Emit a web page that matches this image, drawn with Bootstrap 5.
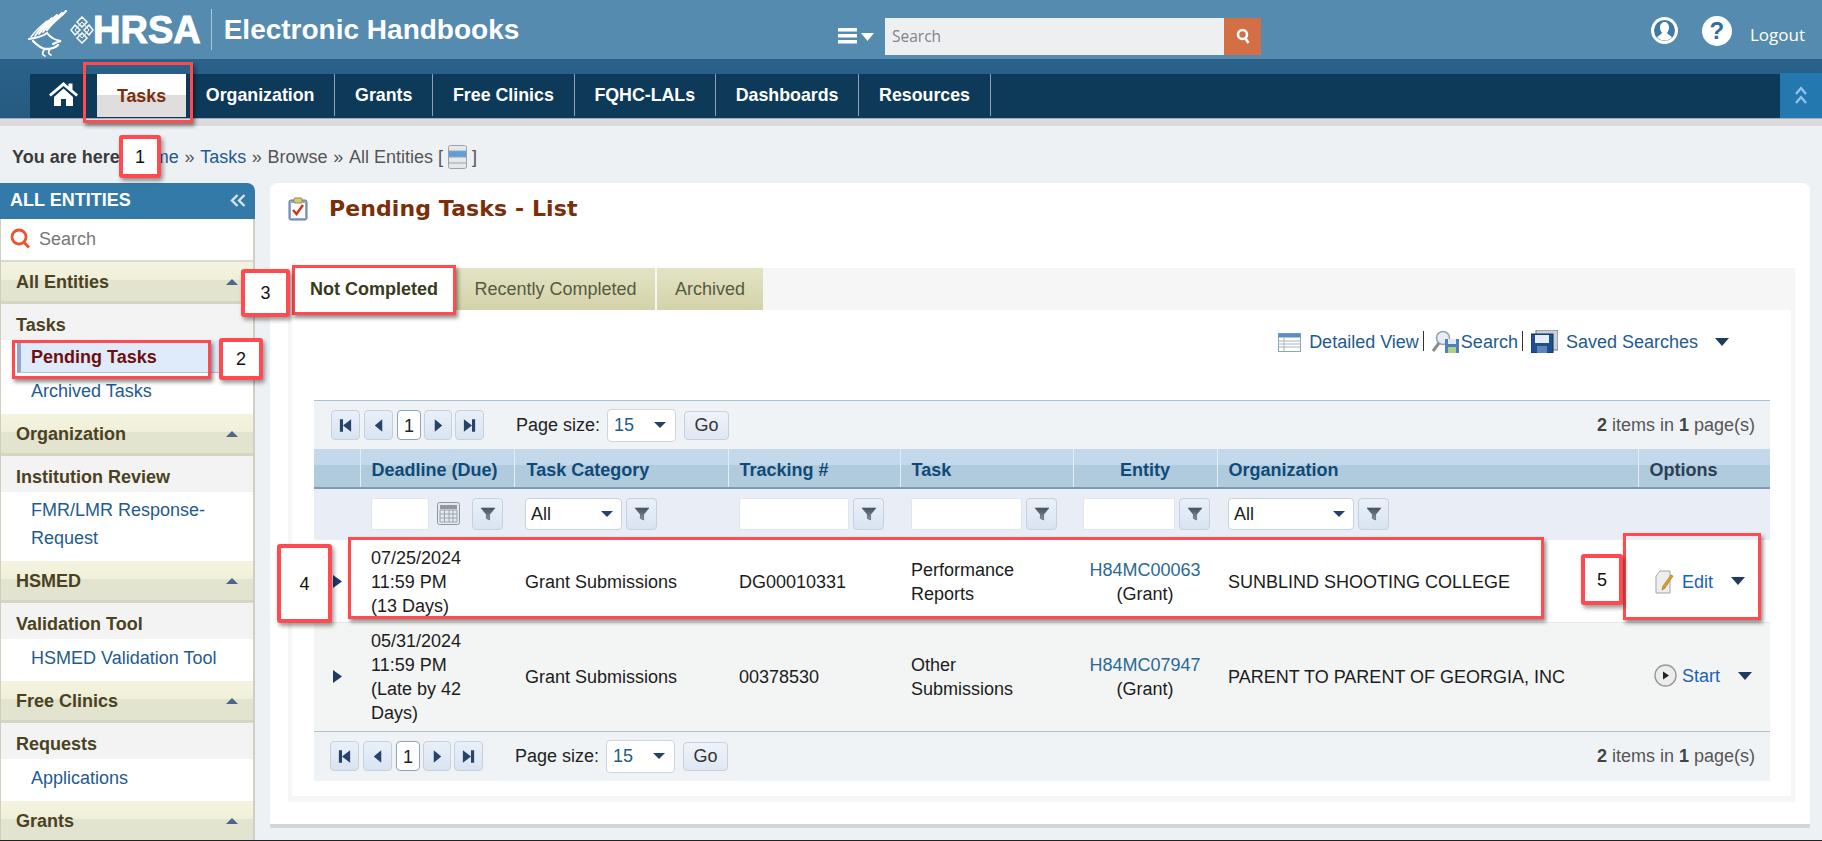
<!DOCTYPE html>
<html lang="en">
<head>
<meta charset="utf-8">
<title>Electronic Handbooks</title>
<link href="https://cdn.jsdelivr.net/npm/bootstrap@5.3.0/dist/css/bootstrap.min.css" rel="stylesheet">
<style>
html,body{height:841px;overflow:hidden}
body{position:relative;background:#eef1f4;font-family:"Liberation Sans",Arial,sans-serif;font-size:18px;line-height:24px;color:#1c1c1c;border-bottom:1px solid #222}
a{text-decoration:none}
.hdr-top{height:59px;background:#568bb0;padding-left:28px}
.hdr-left{width:810px}
.hdr-dn{margin-top:13px}
.logo-knot{margin-left:-5px}
.logo-hrsa{font-weight:700;font-size:38px;line-height:38px;color:#fff;-webkit-text-stroke:1px #fff;margin-left:-1px}
.logo-div{width:1px;height:41px;background:#a9c6da;margin:0 12px 0 10px}
.logo-title{font-weight:700;font-size:28px;color:#fff;line-height:40px}
.menu-ic{margin-right:11px}
.hdr-search{width:339px;height:37px;background:#eeeff1;border:0;border-radius:0;font-family:"Open Sans",sans-serif;font-size:15.5px;padding:0 7px;color:#777}
.hdr-search::placeholder{color:#80848a}
.hdr-go{width:37px;height:37px;background:#d46e45}
.hdr-right{margin-left:auto;margin-top:2px;padding-right:17px;color:#fff;font-family:"Open Sans",sans-serif;font-size:17px}
.hdr-logout{margin-top:8px}
.help-circ{width:30px;height:30px;border-radius:50%;background:#fff;color:#2e6f9d;font:700 24px/30px "Liberation Sans",sans-serif;text-align:center;margin:0 18px 0 23px}
.band{height:59px;padding:15px 0 0 30px;background:linear-gradient(#2a628a,#265a80)}
.nav-main{height:44px;background:#0e3a5a;flex-wrap:nowrap}
.mlink{display:flex;align-items:center;height:42px;padding:0 19.8px;border-right:1px solid #8aa2b4;color:#fff;font-weight:700;font-size:17.8px;white-space:nowrap}
.mhome{width:67px;height:44px;padding:0 0 6px 19px;border:0}
.mtasks{width:89px;height:43px;padding:0;border:0;justify-content:center;color:#7a2e0a;background:linear-gradient(#fff 0,#fff 50%,#dfdddd 50%,#dfdddd 100%)}
.coll-btn{width:42px;height:45px;margin-top:-1px;background:#2478b0;margin-left:auto}
.strip{height:8px;background:#dcdadc;border-top:1px solid #9fb2c0}
.crumbs{height:57px;padding:4px 0 0 12px;color:#555;white-space:nowrap}
.crumbs b{color:#3b3b3b}
.crumbs a{color:#1f5b8e}
.crumbs span{margin:0 .7px}
.body-row{height:657px}
.side{width:255px;height:657px;overflow:hidden;flex:none}
.side-hd{height:36px;background:#337aa8;border-top-right-radius:8px;color:#fff;font-weight:700;padding:0 9px 2px 10px}
.side-inner{border-left:1px solid #cfcfc0;border-right:2px solid #cfcfc4;background:#fff}
.side-srch{height:43px;padding:0 0 2px 9px;color:#777;border-bottom:2px solid #d9d9d9}
.acc-hd{height:42px;padding:0 15px;background:linear-gradient(#f3f3df 0,#f0f0da 45%,#e3e4d0 45%,#e3e4d0 100%);border-bottom:3px solid #d5d5c2;color:#4a4220;font-weight:700}
.acc-sub{height:36px;line-height:42px;padding-left:15px;background:#f3f3f3;color:#4a4220;font-weight:700}
.acc-cur{height:33px;line-height:34px;margin:0 33px 0 16px;padding-left:10px;background:#dfeafa;border-left:4px solid #8fa7cf;border-bottom:1px solid #aec2da;color:#6d0f0f;font-weight:700}
.acc-lnk{display:block;padding:5px 16px 9px 30px;line-height:28px;color:#1f5b8e;background:#fff}
.lk-t{padding-top:4px;padding-bottom:9px}
.tri-up{width:0;height:0;border:6px solid transparent;border-top:0;border-bottom:6px solid #4d6687}
.tri-dn{display:inline-block;width:0;height:0;border:7px solid transparent;border-bottom:0;border-top:8px solid #1f3a63}
.tri-sel{display:inline-block;width:0;height:0;border:6px solid transparent;border-bottom:0;border-top:6px solid #26406a}
.panel{margin-left:15px;width:1540px;height:645px;background:#fff;border-bottom:4px solid #d3d6d9;border-radius:8px 8px 0 0;padding:0 15px 0 18px}
.ttl{padding-top:11px}
.ttl h1{font:700 22px/30px "DejaVu Sans",sans-serif;color:#7a2e0a;margin:0 0 0 21px;letter-spacing:.1px}
.tabbox{height:534px;border:solid #f5f6f6;border-width:0 4px 6px;padding:0 21px 0 22px;margin-top:44px}
.tabstrip{height:42px;background:#f6f6f6;margin:0 -21px 0 -22px;padding-left:0;flex-wrap:nowrap}
.tabx{display:flex;align-items:center;justify-content:center;height:42px;color:#555a40;background:linear-gradient(#e3e4c4,#d3d2aa);margin-right:2px}
.tab-a{width:164px;background:#fff;color:#3a3a1c;font-weight:700;margin-right:0}
.tab-b{width:199px}
.tab-c{width:106px}
.tools{height:90px;padding:20px 41px 0 0;color:#1f5b8e}
.tools a{color:#1f5b8e}
.tools .tri-dn{margin-left:17px;margin-top:8px}
.sep{width:1px;height:20px;background:#333;margin:1px 8px 0 4px}
.ic-gap{margin-right:2px}
.gridwrap{border-top:1px solid #a9c2d6}
.pbar{height:48px;padding:0 15px 0 17px;background:#f0f3f6}
.pbar2{height:49px;padding:0 15px 0 16px}
.pbtn{display:flex;align-items:center;justify-content:center;width:29px;height:30px;margin-right:4px;background:linear-gradient(#eaf0f8,#d9e4f2);border:1px solid #c6d1df;border-radius:4px}
.pbtn.nx{margin-right:3px;width:28px}
.pcur{width:24px;height:30px;margin-right:3px;background:#fff;border:1px solid #8ea5c0;border-radius:4px;text-align:center;line-height:30px;color:#222}
.psize{margin:0 7px 0 28px;color:#222}
.fsel{display:flex;align-items:center;justify-content:space-between;background:#fff;border:1px solid #ccd5e0;border-radius:4px;height:33px;padding:0 9px 0 6px;color:#1f5b8e}
.fs-p{width:69px}
.gobtn{display:flex;align-items:center;justify-content:center;width:45px;height:29px;margin-left:8px;color:#333;background:linear-gradient(#f0f3f8,#dfe7f3);border:1px solid #c6d1df;border-radius:4px}
.pinfo{color:#555}
.pinfo b{color:#444}
.gtbl{table-layout:fixed;width:1456px;margin:0;border-collapse:collapse;--bs-table-bg:transparent}
.gtbl th,.gtbl td{padding:0 11px;border:0;vertical-align:middle;font-weight:400;color:#1c1c1c;box-shadow:none}
.gtbl .hrow th{height:39px;padding-top:3px;font-weight:700;color:#0f4a78;background:linear-gradient(#c3d8eb 0,#c3d8eb 42%,#b0cade 42%,#b0cade 100%);border-right:1px solid #e3edf5;border-bottom:2px solid #7e9ab2}
.gtbl .hrow th:last-child{border-right:0;color:#2b3f55}
.gtbl .hrow th:nth-child(3){padding-left:12px}
.gtbl .frow td{height:52px;padding-bottom:2px;background:#e9edf5}
.gtbl .r1 td{height:82px;padding-top:2px;background:#fff;border-bottom:1px solid #e6e6e6}
.gtbl .r2 td{height:109px;background:#f3f5f5;border-bottom:1px solid #b3c2d2}
.gtbl .ent{text-align:center;padding:0}
.gtbl .ent a{color:#2a6a92}
.gtbl .tgl{padding:0 0 0 19px}
.in-f{height:32px;background:#fff;border:1px solid #e2e6ec;border-radius:2px;padding:0}
.sel-f{height:32px;color:#222;padding:0 8px 0 5px;border-color:#c8d2e0}
.fbtn{display:flex;align-items:center;justify-content:center;flex:none;width:31px;height:32px;margin-left:4px;background:linear-gradient(#eaf0f8,#d9e4f2);border:1px solid #c6d1df;border-radius:4px}
.optl{color:#1a62b8}
.anb{position:absolute;border:3px solid #ff4b4f;box-shadow:2px 3px 4px rgba(0,0,0,.45);pointer-events:none}
.anb-n{position:absolute;display:flex;align-items:center;justify-content:center;background:#fff;border:4px solid #ff4b4f;border-radius:3px;box-shadow:2px 3px 4px rgba(0,0,0,.4);color:#111;font-size:18px}
.a1{left:83px;top:62px;width:110px;height:61px}
.a2{left:12px;top:340px;width:199px;height:39px}
.a3{left:292px;top:265px;width:164px;height:50px}
.a4{left:348px;top:537px;width:1196px;height:82px}
.a5{left:1623px;top:533px;width:138px;height:87px}
.n1{left:119px;top:135px;width:42px;height:43px}
.n2{left:219px;top:338px;width:44px;height:42px}
.n3{left:241px;top:269px;width:49px;height:48px}
.n4{left:277px;top:544px;width:55px;height:79px}
.n5{left:1581px;top:554px;width:42px;height:51px}
</style>
</head>
<body>
<svg width="0" height="0" class="position-absolute">
<defs>
<linearGradient id="g-fil" x1="0" y1="0" x2="0" y2="1"><stop offset="0" stop-color="#45525f"/><stop offset="1" stop-color="#8794a2"/></linearGradient>
<symbol id="i-fil" viewBox="0 0 16 16"><path d="M1 2h14L9.600 8.400V14L6.400 12.500V8.400z" fill="url(#g-fil)" stroke="#4b5865" stroke-width=".6"/></symbol>
<symbol id="i-first" viewBox="0 0 12 12"><path d="M1.500 1h2.500v10H1.500zM10.500 1v10L4 6z" fill="#27426b"/></symbol>
<symbol id="i-prev" viewBox="0 0 12 12"><path d="M9 1v10L3 6z" fill="#27426b"/></symbol>
<symbol id="i-next" viewBox="0 0 12 12"><path d="M3 1v10l6-5z" fill="#27426b"/></symbol>
<symbol id="i-last" viewBox="0 0 12 12"><path d="M10.500 1H8v10h2.500zM1.500 1v10L8 6z" fill="#27426b"/></symbol>
</defs>
</svg>

<header class="hdr-top d-flex align-items-center">
  <div class="hdr-left d-flex align-items-center">
    <svg class="mt-2" width="47" height="48" viewBox="28 10 47 48" fill="none" stroke="#fff" stroke-linecap="round">
      <path d="M66 11C60 18 53 21 47 30" stroke-width="2.200"/>
      <path d="M62 13C56 19 49 23 43 32" stroke-width="2"/>
      <path d="M57 15C51 20 45 25 39 34" stroke-width="2"/>
      <path d="M52 18C46 23 40 28 35 36" stroke-width="1.800"/>
      <path d="M47 21C42 25 36 30 31 37" stroke-width="1.600"/>
      <path d="M29 39C36 38 43 36 47 33C50 37 54 40 61 41C57 42 55 43 53 44" stroke-width="2"/>
      <path d="M33 41C38 46 42 49 46 49C52 49 56 47 58 45" stroke-width="2.400"/>
      <path d="M44 50C42 53 42 55 45 56M50 49C48 52 48 54 51 55" stroke-width="1.800"/>
    </svg>
    <svg class="logo-knot" width="24" height="28" viewBox="0 0 24 28" fill="none" stroke="#fff" stroke-width="1.500">
      <path d="M12 1l5 5-5 5-5-5zM12 17l5 5-5 5-5-5zM5 9l5 5-5 5-4-5zM19 9l4 5-4 5-5-5z"/>
      <path d="M12 6l7 8-7 8-7-8z" stroke-width="1"/>
    </svg>
    <span class="logo-hrsa">HRSA</span>
    <span class="logo-div"></span>
    <span class="logo-title">Electronic Handbooks</span>
  </div>
  <svg class="menu-ic hdr-dn" width="36" height="16" viewBox="0 0 36 16">
    <path d="M0 0h19v3.500H0zM0 6h19v3.500H0zM0 12h19v3.500H0z" fill="#fff"/>
    <path d="M23 5h13l-6.500 8z" fill="#fff"/>
  </svg>
  <input class="hdr-search hdr-dn form-control" type="text" placeholder="Search" aria-label="Search">
  <div class="hdr-go hdr-dn d-flex align-items-center justify-content-center">
    <svg width="14" height="16" viewBox="0 0 14 16" fill="none" stroke="#fff" stroke-width="2.600"><circle cx="6.500" cy="6.500" r="4.500"/><path d="M9.500 10.500L12.500 15"/></svg>
  </div>
  <div class="hdr-right d-flex align-items-center">
    <svg width="29" height="29" viewBox="0 0 29 29">
      <circle cx="14.500" cy="14.500" r="13.500" fill="#fff"/>
      <circle cx="14.500" cy="14.500" r="10.500" fill="#3f7aa5"/>
      <path d="M14.500 6c3 0 4.500 2.500 4.500 5.500 0 2.500-1 4-2 5 0 1.500 2.500 2.500 5 4.500-1.500 2-4 3.500-7.500 3.500S8.500 23 7 21c2.500-2 5-3 5-4.500-1-1-2-2.500-2-5C10 8.500 11.500 6 14.500 6z" fill="#fff"/>
    </svg>
    <div class="help-circ">?</div>
    <span class="hdr-logout">Logout</span>
  </div>
</header>

<div class="band">
  <ul class="nav nav-main">
    <li class="nav-item"><a class="mlink mhome" href="#" aria-label="Home">
      <svg width="29" height="25" viewBox="0 0 29 25"><path d="M14.500 1L0 13.500l1.800 2L14.500 5l12.700 10.500 1.800-2L23.500 8.800V2.500h-4v3zM5 16v9h7v-7h5v7h7v-9L14.500 7.500z" fill="#fff"/></svg>
    </a></li>
    <li class="nav-item"><a class="mlink mtasks" href="#">Tasks</a></li>
    <li class="nav-item"><a class="mlink" href="#">Organization</a></li>
    <li class="nav-item"><a class="mlink" href="#">Grants</a></li>
    <li class="nav-item"><a class="mlink" href="#">Free Clinics</a></li>
    <li class="nav-item"><a class="mlink" href="#">FQHC-LALs</a></li>
    <li class="nav-item"><a class="mlink" href="#">Dashboards</a></li>
    <li class="nav-item"><a class="mlink" href="#">Resources</a></li>
    <li class="nav-item coll-btn d-flex align-items-center justify-content-center">
      <svg width="14" height="20" viewBox="0 0 14 20" fill="none" stroke="#8fc3e8" stroke-width="2.400"><path d="M2 8l5-6 5 6M2 17l5-6 5 6"/></svg>
    </li>
  </ul>
</div>
<div class="strip"></div>

<div class="crumbs d-flex align-items-center">
  <b>You are here:</b>&nbsp;<a href="#">Home</a><span>&nbsp;»&nbsp;</span><a href="#">Tasks</a><span>&nbsp;»&nbsp;</span>Browse<span>&nbsp;»&nbsp;</span>All Entities&nbsp;[&nbsp;
  <svg width="19" height="24" viewBox="0 0 19 24"><rect x=".5" y=".5" width="18" height="23" rx="2" fill="#e6e8ea" stroke="#9aa3ac"/><rect x="1" y="6" width="17" height="6" fill="#5aa0dc"/><path d="M1 6h17M1 12h17M1 18h17" stroke="#9aa3ac"/></svg>
  &nbsp;]
</div>

<div class="body-row d-flex">
  <aside class="side">
    <div class="side-hd d-flex align-items-center justify-content-between">
      <span>ALL ENTITIES</span>
      <svg width="16" height="13" viewBox="0 0 16 13" fill="none" stroke="#d5e6f2" stroke-width="2.400"><path d="M7.500 1L2 6.500 7.500 12M14.500 1L9 6.500l5.500 5.500"/></svg>
    </div>
    <div class="side-inner">
      <div class="side-srch d-flex align-items-center gap-2">
        <svg width="21" height="21" viewBox="0 0 21 21" fill="none" stroke="#f0522c" stroke-width="2.800"><circle cx="9" cy="9" r="7"/><path d="M14 14.500l5 5"/></svg>
        <span>Search</span>
      </div>
      <div class="acc-hd d-flex align-items-center justify-content-between"><span>All Entities</span><i class="tri-up"></i></div>
      <div class="acc-sub">Tasks</div>
      <div class="acc-cur">Pending Tasks</div>
      <a class="acc-lnk lk-t" href="#">Archived Tasks</a>
      <div class="acc-hd d-flex align-items-center justify-content-between"><span>Organization</span><i class="tri-up"></i></div>
      <div class="acc-sub">Institution Review</div>
      <a class="acc-lnk lk-t" href="#">FMR/LMR Response-Request</a>
      <div class="acc-hd d-flex align-items-center justify-content-between"><span>HSMED</span><i class="tri-up"></i></div>
      <div class="acc-sub">Validation Tool</div>
      <a class="acc-lnk" href="#">HSMED Validation Tool</a>
      <div class="acc-hd d-flex align-items-center justify-content-between"><span>Free Clinics</span><i class="tri-up"></i></div>
      <div class="acc-sub">Requests</div>
      <a class="acc-lnk" href="#">Applications</a>
      <div class="acc-hd d-flex align-items-center justify-content-between"><span>Grants</span><i class="tri-up"></i></div>
    </div>
  </aside>

  <main class="panel">
    <div class="ttl d-flex align-items-center">
      <svg width="20" height="24" viewBox="0 0 20 24"><rect x="1" y="3" width="18" height="20" rx="2" fill="#8ea9cc" stroke="#5f7ba0"/><rect x="3" y="6" width="14" height="15" fill="#fff"/><rect x="6" y="1" width="8" height="5" rx="1" fill="#d9c77a" stroke="#9a8a44"/><path d="M5 13l3.500 4L15 8" fill="none" stroke="#d92e20" stroke-width="2.400"/></svg>
      <h1>Pending Tasks - List</h1>
    </div>
    <div class="tabbox">
      <div class="tabstrip d-flex">
        <a class="tabx tab-a" href="#">Not Completed</a>
        <a class="tabx tab-b" href="#">Recently Completed</a>
        <a class="tabx tab-c" href="#">Archived</a>
      </div>
      <div class="tools d-flex align-items-start justify-content-end">
        <svg class="me-2" width="23" height="19" viewBox="0 0 23 19" style="margin-top:3px"><rect x=".5" y=".5" width="22" height="18" fill="#fff" stroke="#8aa"/><rect x=".5" y=".5" width="22" height="4" fill="#5b8fc4"/><path d="M1 8h21M1 11h21M1 14h21M6 5v13" stroke="#a9b4c0"/></svg>
        <a href="#">Detailed View</a><span class="sep"></span>
        <svg class="ic-gap" width="27" height="23" viewBox="0 0 27 23"><circle cx="11" cy="8" r="6.500" fill="#e6edf3" stroke="#9aa5ae" stroke-width="1.600"/><path d="M7 13L1 21" stroke="#8d8d8d" stroke-width="3"/><rect x="13" y="9" width="14" height="14" fill="#4f7fc1"/><rect x="16" y="9" width="8" height="5" fill="#dfe8f3"/><rect x="16" y="17" width="8" height="6" fill="#a9d37f"/></svg>
        <a href="#">Search</a><span class="sep"></span>
        <svg class="me-2" width="27" height="23" viewBox="0 0 27 23"><rect x="5" y="0" width="22" height="20" fill="#c9d0d8" stroke="#778"/><rect x="0" y="4" width="22" height="19" fill="#1f4f8f" stroke="#12305a"/><rect x="4" y="5" width="14" height="8" fill="#e8eef5"/><rect x="6" y="16" width="10" height="7" fill="#5f85b8"/></svg>
        <a href="#">Saved Searches</a>
        <i class="tri-dn"></i>
      </div>

      <div class="gridwrap">
        <div class="pbar d-flex align-items-center justify-content-between">
          <div class="d-flex align-items-center">
            <a class="pbtn" href="#" aria-label="First"><svg width="15" height="15"><use href="#i-first"/></svg></a>
            <a class="pbtn" href="#" aria-label="Previous"><svg width="15" height="15"><use href="#i-prev"/></svg></a>
            <div class="pcur">1</div>
            <a class="pbtn nx" href="#" aria-label="Next"><svg width="15" height="15"><use href="#i-next"/></svg></a>
            <a class="pbtn" href="#" aria-label="Last"><svg width="15" height="15"><use href="#i-last"/></svg></a>
            <span class="psize">Page size:</span>
            <div class="fsel fs-p"><span>15</span><i class="tri-sel"></i></div>
            <a class="gobtn" href="#">Go</a>
          </div>
          <div class="pinfo"><b>2</b> items in <b>1</b> page(s)</div>
        </div>
        <table class="table gtbl">
          <colgroup><col style="width:46px"><col style="width:154px"><col style="width:214px"><col style="width:172px"><col style="width:173px"><col style="width:144px"><col style="width:421px"><col style="width:132px"></colgroup>
          <thead>
            <tr class="hrow">
              <th></th><th>Deadline (Due)</th><th>Task Category</th><th>Tracking #</th><th>Task</th><th class="text-center">Entity</th><th>Organization</th><th>Options</th>
            </tr>
            <tr class="frow">
              <td></td>
              <td><div class="d-flex align-items-center">
                <div class="in-f" style="width:58px"></div>
                <svg class="ms-2" width="23" height="23" viewBox="0 0 23 23" style="flex:none"><rect x=".5" y=".5" width="22" height="22" rx="2" fill="#e5e9ee" stroke="#8e98a4"/><rect x="3" y="3" width="17" height="4" fill="#8e98a4"/><path d="M3 8h17v12H3zM3 12h17M3 16h17M7.500 8v12M12 8v12M16 8v12" fill="none" stroke="#9aa4b0"/></svg>
                <a class="fbtn" style="margin-left:12px" href="#" aria-label="Filter"><svg width="16" height="16"><use href="#i-fil"/></svg></a>
              </div></td>
              <td><div class="d-flex align-items-center"><div class="fsel sel-f" style="width:97px"><span>All</span><i class="tri-sel"></i></div><a class="fbtn" href="#" aria-label="Filter"><svg width="16" height="16"><use href="#i-fil"/></svg></a></div></td>
              <td><div class="d-flex align-items-center"><div class="in-f" style="width:110px"></div><a class="fbtn" href="#" aria-label="Filter"><svg width="16" height="16"><use href="#i-fil"/></svg></a></div></td>
              <td><div class="d-flex align-items-center"><div class="in-f" style="width:111px"></div><a class="fbtn" href="#" aria-label="Filter"><svg width="16" height="16"><use href="#i-fil"/></svg></a></div></td>
              <td style="padding-right:0"><div class="d-flex align-items-center" style="margin-left:-1px"><div class="in-f" style="width:92px"></div><a class="fbtn" href="#" aria-label="Filter"><svg width="16" height="16"><use href="#i-fil"/></svg></a></div></td>
              <td><div class="d-flex align-items-center"><div class="fsel sel-f" style="width:126px"><span>All</span><i class="tri-sel"></i></div><a class="fbtn" href="#" aria-label="Filter"><svg width="16" height="16"><use href="#i-fil"/></svg></a></div></td>
              <td></td>
            </tr>
          </thead>
          <tbody>
            <tr class="r1">
              <td class="tgl"><svg width="9" height="13" viewBox="0 0 9 13" class="d-block"><path d="M0 0l9 6.500L0 13z" fill="#1f3a63"/></svg></td>
              <td>07/25/2024<br>11:59 PM<br>(13 Days)</td>
              <td>Grant Submissions</td>
              <td>DG00010331</td>
              <td>Performance Reports</td>
              <td class="ent"><a href="#">H84MC00063</a><br>(Grant)</td>
              <td>SUNBLIND SHOOTING COLLEGE</td>
              <td style="padding-left:17px"><div class="d-flex align-items-center">
                <svg width="19" height="24" viewBox="0 0 19 24" style="flex:none"><path d="M5 1h10v22H1V6z" fill="#eeeeee" stroke="#a5a5a5"/><path d="M18 6L10 18l-3 2 1-4 8-11z" fill="#e0a030" stroke="#a87018" stroke-width=".7"/></svg>
                <a class="optl ms-2" href="#">Edit</a><i class="tri-dn" style="margin-left:18px;margin-top:-2px"></i></div></td>
            </tr>
            <tr class="r2">
              <td class="tgl"><svg width="9" height="13" viewBox="0 0 9 13" class="d-block"><path d="M0 0l9 6.500L0 13z" fill="#1f3a63"/></svg></td>
              <td>05/31/2024<br>11:59 PM<br>(Late by 42 Days)</td>
              <td>Grant Submissions</td>
              <td>00378530</td>
              <td>Other Submissions</td>
              <td class="ent"><a href="#">H84MC07947</a><br>(Grant)</td>
              <td>PARENT TO PARENT OF GEORGIA, INC</td>
              <td style="padding-left:16px"><div class="d-flex align-items-center" style="margin-top:-2px">
                <svg width="23" height="23" viewBox="0 0 23 23" style="flex:none"><circle cx="11.500" cy="11.500" r="10.500" fill="#ececec" stroke="#9a9a9a" stroke-width="1.400"/><path d="M9 7.500l6 4-6 4z" fill="#222"/></svg>
                <a class="optl" style="margin-left:5px" href="#">Start</a><i class="tri-dn" style="margin-left:18px"></i></div></td>
            </tr>
          </tbody>
        </table>
        <div class="pbar pbar2 d-flex align-items-center justify-content-between">
          <div class="d-flex align-items-center">
            <a class="pbtn" href="#" aria-label="First"><svg width="15" height="15"><use href="#i-first"/></svg></a>
            <a class="pbtn" href="#" aria-label="Previous"><svg width="15" height="15"><use href="#i-prev"/></svg></a>
            <div class="pcur">1</div>
            <a class="pbtn nx" href="#" aria-label="Next"><svg width="15" height="15"><use href="#i-next"/></svg></a>
            <a class="pbtn" href="#" aria-label="Last"><svg width="15" height="15"><use href="#i-last"/></svg></a>
            <span class="psize">Page size:</span>
            <div class="fsel fs-p"><span>15</span><i class="tri-sel"></i></div>
            <a class="gobtn" href="#">Go</a>
          </div>
          <div class="pinfo"><b>2</b> items in <b>1</b> page(s)</div>
        </div>
      </div>
    </div>
  </main>
</div>

<div class="anb a1"></div><div class="anb a2"></div><div class="anb a3"></div><div class="anb a4"></div><div class="anb a5"></div>
<div class="anb-n n1">1</div><div class="anb-n n2">2</div><div class="anb-n n3">3</div><div class="anb-n n4">4</div><div class="anb-n n5">5</div>
<script src="https://cdn.jsdelivr.net/npm/bootstrap@5.3.0/dist/js/bootstrap.bundle.min.js"></script>
</body>
</html>
